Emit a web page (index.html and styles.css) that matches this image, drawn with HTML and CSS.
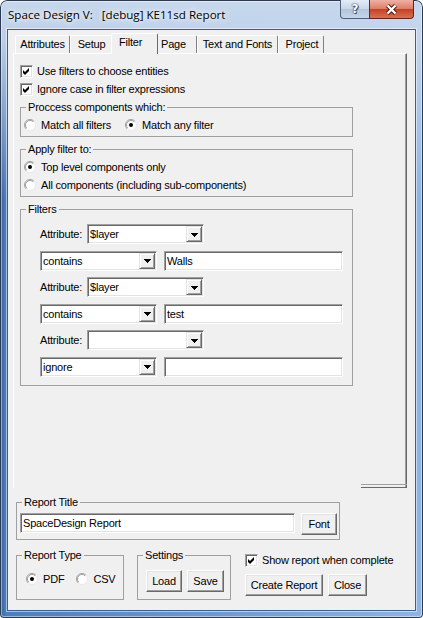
FILE: index.html
```html
<!DOCTYPE html>
<html>
<head>
<meta charset="utf-8">
<title>KE11sd Report</title>
<link rel="stylesheet" href="styles.css">
</head>
<body>
<div class="window">
  <div class="titlebar">
    <div class="title">Space Design V:&nbsp;&nbsp; [debug] KE11sd Report</div>
    <div class="caption">
      <div class="cbtn help">?</div>
      <div class="cbtn close">
        <svg width="13" height="11" viewBox="0 0 13 11"><path d="M2.5 1.5 L10.5 9.5 M10.5 1.5 L2.5 9.5" stroke="#4a1208" stroke-width="4.2" fill="none"/><path d="M2.5 1.5 L10.5 9.5 M10.5 1.5 L2.5 9.5" stroke="#fff" stroke-width="2.4" fill="none"/></svg>
      </div>
    </div>
  </div>
  <div class="client">
    <div class="tabbar">
      <div class="tab t-attr">Attributes</div>
      <div class="tab t-setup">Setup</div>
      <div class="tab active">Filter</div>
      <div class="tab t-page">Page</div>
      <div class="tab t-text">Text and Fonts</div>
      <div class="tab t-proj">Project</div>
    </div>
    <div class="panel">
      <div class="chkrow"><span class="chk"><svg width="9" height="9" viewBox="0 0 9 9"><polygon points="1,3 3,5 7,1 7,4 3,8 1,6" fill="#000"/></svg></span>Use filters to choose entities</div>
      <div class="chkrow"><span class="chk"><svg width="9" height="9" viewBox="0 0 9 9"><polygon points="1,3 3,5 7,1 7,4 3,8 1,6" fill="#000"/></svg></span>Ignore case in filter expressions</div>

      <fieldset class="grp g-process">
        <legend>Proccess components which:</legend>
        <div class="radios-inline">
          <div class="radio r-wide"><svg width="12" height="12" viewBox="0 0 12 12"><circle cx="6" cy="6" r="5.5" fill="#fff"/><path d="M2.1 9.9 A5.5 5.5 0 0 1 9.9 2.1" stroke="#a0a0a0" fill="none"/><path d="M9.9 2.1 A5.5 5.5 0 0 1 2.1 9.9" stroke="#e8e8e8" fill="none"/><path d="M2.8 9.2 A4.5 4.5 0 0 1 9.2 2.8" stroke="#8a8a8a" stroke-width="0.8" fill="none"/></svg>Match all filters</div>
          <div class="radio"><svg width="12" height="12" viewBox="0 0 12 12"><circle cx="6" cy="6" r="5.5" fill="#fff"/><path d="M2.1 9.9 A5.5 5.5 0 0 1 9.9 2.1" stroke="#a0a0a0" fill="none"/><path d="M9.9 2.1 A5.5 5.5 0 0 1 2.1 9.9" stroke="#e8e8e8" fill="none"/><path d="M2.8 9.2 A4.5 4.5 0 0 1 9.2 2.8" stroke="#8a8a8a" stroke-width="0.8" fill="none"/><circle cx="6" cy="6" r="2" fill="#000"/></svg>Match any filter</div>
        </div>
      </fieldset>

      <fieldset class="grp g-apply">
        <legend>Apply filter to:</legend>
        <div class="radio rowr"><svg width="12" height="12" viewBox="0 0 12 12"><circle cx="6" cy="6" r="5.5" fill="#fff"/><path d="M2.1 9.9 A5.5 5.5 0 0 1 9.9 2.1" stroke="#a0a0a0" fill="none"/><path d="M9.9 2.1 A5.5 5.5 0 0 1 2.1 9.9" stroke="#e8e8e8" fill="none"/><path d="M2.8 9.2 A4.5 4.5 0 0 1 9.2 2.8" stroke="#8a8a8a" stroke-width="0.8" fill="none"/><circle cx="6" cy="6" r="2" fill="#000"/></svg>Top level components only</div>
        <div class="radio rowr"><svg width="12" height="12" viewBox="0 0 12 12"><circle cx="6" cy="6" r="5.5" fill="#fff"/><path d="M2.1 9.9 A5.5 5.5 0 0 1 9.9 2.1" stroke="#a0a0a0" fill="none"/><path d="M9.9 2.1 A5.5 5.5 0 0 1 2.1 9.9" stroke="#e8e8e8" fill="none"/><path d="M2.8 9.2 A4.5 4.5 0 0 1 9.2 2.8" stroke="#8a8a8a" stroke-width="0.8" fill="none"/></svg>All components (including sub-components)</div>
      </fieldset>

      <fieldset class="grp g-filters">
        <legend>Filters</legend>
        <div class="frows">
          <div class="frow"><span class="attr">Attribute:</span><div class="combo"><span class="val">$layer</span><span class="dd"><svg width="7" height="4" viewBox="0 0 7 4" shape-rendering="crispEdges"><path d="M0 0h7v1h-1v1h-1v1h-1v1h-1v-1h-1v-1h-1v-1h-1z" fill="#000"/></svg></span></div></div>
          <div class="frow"><div class="combo"><span class="val">contains</span><span class="dd"><svg width="7" height="4" viewBox="0 0 7 4" shape-rendering="crispEdges"><path d="M0 0h7v1h-1v1h-1v1h-1v1h-1v-1h-1v-1h-1v-1h-1z" fill="#000"/></svg></span></div><div class="field f-val">Walls</div></div>
          <div class="frow"><span class="attr">Attribute:</span><div class="combo"><span class="val">$layer</span><span class="dd"><svg width="7" height="4" viewBox="0 0 7 4" shape-rendering="crispEdges"><path d="M0 0h7v1h-1v1h-1v1h-1v1h-1v-1h-1v-1h-1v-1h-1z" fill="#000"/></svg></span></div></div>
          <div class="frow"><div class="combo"><span class="val">contains</span><span class="dd"><svg width="7" height="4" viewBox="0 0 7 4" shape-rendering="crispEdges"><path d="M0 0h7v1h-1v1h-1v1h-1v1h-1v-1h-1v-1h-1v-1h-1z" fill="#000"/></svg></span></div><div class="field f-val">test</div></div>
          <div class="frow"><span class="attr">Attribute:</span><div class="combo"><span class="val"></span><span class="dd"><svg width="7" height="4" viewBox="0 0 7 4" shape-rendering="crispEdges"><path d="M0 0h7v1h-1v1h-1v1h-1v1h-1v-1h-1v-1h-1v-1h-1z" fill="#000"/></svg></span></div></div>
          <div class="frow"><div class="combo"><span class="val">ignore</span><span class="dd"><svg width="7" height="4" viewBox="0 0 7 4" shape-rendering="crispEdges"><path d="M0 0h7v1h-1v1h-1v1h-1v1h-1v-1h-1v-1h-1v-1h-1z" fill="#000"/></svg></span></div><div class="field f-val"></div></div>
        </div>
      </fieldset>
    </div>

    <fieldset class="grp g-title">
      <legend>Report Title</legend>
      <div class="title-row">
        <div class="field f-title">SpaceDesign Report</div>
        <div class="btn b-font">Font</div>
      </div>
    </fieldset>

    <div class="bottom">
      <fieldset class="grp g-type">
        <legend>Report Type</legend>
        <div class="type-row">
          <div class="radio r-pdf"><svg width="12" height="12" viewBox="0 0 12 12"><circle cx="6" cy="6" r="5.5" fill="#fff"/><path d="M2.1 9.9 A5.5 5.5 0 0 1 9.9 2.1" stroke="#a0a0a0" fill="none"/><path d="M9.9 2.1 A5.5 5.5 0 0 1 2.1 9.9" stroke="#e8e8e8" fill="none"/><path d="M2.8 9.2 A4.5 4.5 0 0 1 9.2 2.8" stroke="#8a8a8a" stroke-width="0.8" fill="none"/><circle cx="6" cy="6" r="2" fill="#000"/></svg>PDF</div>
          <div class="radio"><svg width="12" height="12" viewBox="0 0 12 12"><circle cx="6" cy="6" r="5.5" fill="#fff"/><path d="M2.1 9.9 A5.5 5.5 0 0 1 9.9 2.1" stroke="#a0a0a0" fill="none"/><path d="M9.9 2.1 A5.5 5.5 0 0 1 2.1 9.9" stroke="#e8e8e8" fill="none"/><path d="M2.8 9.2 A4.5 4.5 0 0 1 9.2 2.8" stroke="#8a8a8a" stroke-width="0.8" fill="none"/></svg>CSV</div>
        </div>
      </fieldset>

      <fieldset class="grp g-settings">
        <legend>Settings</legend>
        <div class="set-row">
          <div class="btn b-load">Load</div>
          <div class="btn b-save">Save</div>
        </div>
      </fieldset>

      <div class="actions">
        <div class="chkrow"><span class="chk"><svg width="9" height="9" viewBox="0 0 9 9"><polygon points="1,3 3,5 7,1 7,4 3,8 1,6" fill="#000"/></svg></span>Show report when complete</div>
        <div class="act-btns">
          <div class="btn b-create">Create Report</div>
          <div class="btn b-close">Close</div>
        </div>
      </div>
    </div>
  </div>
</div>
</body>
</html>
```

FILE: styles.css
```css
* { box-sizing: border-box; }
html, body { margin: 0; padding: 0; }
body {
  width: 423px;
  height: 618px;
  overflow: hidden;
  background: #ffffff;
  font-family: "Liberation Sans", Arial, sans-serif;
  font-size: 11px;
  letter-spacing: -0.2px;
  color: #000;
}

/* ---------- window frame ---------- */
.window {
  width: 423px;
  height: 618px;
  padding: 0 8px 8px;
  display: flex;
  flex-direction: column;
  border-radius: 7px 7px 4px 4px;
  background:
    linear-gradient(180deg, #c7d8ed 0, rgba(199,216,237,0.9) 40px, rgba(199,216,237,0) 200px),
    linear-gradient(90deg, #33609d 0, #4f7dbb 6px, #6d97d0 200px, #8db4e4 100%);
  box-shadow: inset 0 0 0 1px #2b3b52, inset 0 0 0 2px rgba(255,255,255,0.45);
  overflow: hidden;
}
.titlebar {
  flex: none;
  height: 30px;
  display: flex;
  align-items: flex-start;
}
.title {
  font-family: "Open Sans", sans-serif;
  font-size: 11.6px;
  letter-spacing: 0;
  line-height: 18px;
  margin-top: 6px;
  white-space: nowrap;
  color: #000;
  text-shadow: 0 0 8px #fff, 0 0 4px #fff;
}
.caption {
  margin-left: auto;
  margin-right: 1px;
  display: flex;
}
.cbtn {
  height: 19px;
  border: 1px solid #4f607a;
  border-top: 0;
  display: flex;
  align-items: center;
  justify-content: center;
}
.help {
  width: 30px;
  border-radius: 0 0 0 4px;
  background: linear-gradient(180deg, #e4ecf6 0, #cad7e8 48%, #b3c4dc 52%, #c6d5e9 100%);
  color: #fff;
  font-family: "DejaVu Sans", sans-serif;
  font-weight: bold;
  font-size: 12px;
  letter-spacing: 0;
  text-shadow: 0 0 1px #1f2d40, 0 0 2px #3a4a60, 1px 1px 0 #4a5a70;
}
.close {
  width: 45px;
  margin-left: -1px;
  border-color: #6b2418;
  border-radius: 0 0 4px 0;
  background: linear-gradient(180deg, #eeb2a4 0, #dd7d66 48%, #c5412a 52%, #d9714f 100%);
}
.close svg { display: block; }

/* ---------- client ---------- */
.client {
  flex: 1;
  background: #f0f0f0;
  padding: 3px 0 0 5px;
  box-shadow: 0 0 0 1px #3f5d8c, 0 0 0 2px rgba(255,255,255,0.5);
}

/* tabs */
.tabbar {
  display: flex;
  align-items: flex-end;
  height: 20px;
  padding-left: 2px;
  position: relative;
  z-index: 1;
}
.tab {
  height: 18px;
  padding: 0;
  text-align: center;
  line-height: 16px;
  border: 1px solid #808080;
  border-color: #fff #808080 transparent #fff;
  border-bottom: 0;
  border-radius: 2px 2px 0 0;
  background: #f0f0f0;
  white-space: nowrap;
}
.t-attr { width: 55px; }
.t-setup { width: 43px; }
.t-page { width: 41px; text-align: left; padding-left: 4px; }
.t-text { width: 81px; }
.t-proj { width: 46px; padding-left: 2px; }
.tab.active {
  width: 47px;
  height: 21px;
  margin: 0 -2px -1px;
  text-align: left;
  padding-left: 7px;
  border-right-color: #696969;
  position: relative;
  z-index: 2;
}

.panel {
  width: 394px;
  height: 435px;
  border: 1px solid;
  border-color: #fff #696969 transparent #fff;
  border-bottom: 0;
  box-shadow: inset -1px 0 0 #a0a0a0;
  padding: 8px 0 0 6px;
  position: relative;
}
.panel::after {
  content: "";
  position: absolute;
  right: -1px;
  bottom: 0;
  width: 46px;
  height: 2px;
  border-top: 1px solid #a0a0a0;
  border-bottom: 1px solid #696969;
}

/* checkboxes */
.chkrow {
  display: flex;
  align-items: center;
  height: 18px;
  white-space: nowrap;
}
.chk {
  flex: none;
  width: 13px;
  height: 13px;
  margin-right: 4px;
  background: #fff;
  border: 1px solid;
  border-color: #a0a0a0 #fff #fff #a0a0a0;
  box-shadow: inset 1px 1px 0 #696969, inset -1px -1px 0 #e3e3e3;
}
.chk svg { display: block; margin: 1px 0 0 1px; }

/* radios */
.radio {
  display: flex;
  align-items: center;
  white-space: nowrap;
}
.radio svg { flex: none; display: block; margin-right: 5px; }

/* group boxes */
.grp {
  margin: 0;
  padding: 0 3px;
  border: 1px solid #a0a0a0;
  min-width: 0;
}
.grp legend {
  padding: 0 2px;
  margin-left: 2px;
  line-height: 13px;
  white-space: nowrap;
}

.g-process {
  width: 333px;
  margin-top: 2.5px;
  padding-top: 3px;
  padding-bottom: 3px;
}
.radios-inline { display: flex; height: 16px; }
.radios-inline .radio { height: 16px; }
.r-wide { width: 101px; }

.g-apply {
  width: 333px;
  margin-top: 6px;
  padding-top: 2.5px;
  padding-bottom: 2px;
}
.rowr { height: 18px; }

.g-filters {
  width: 333px;
  margin-top: 5.5px;
  padding-top: 8.5px;
  padding-bottom: 8px;
}
.frows {
  padding-left: 16px;
  display: flex;
  flex-direction: column;
  row-gap: 6.6px;
}
.frow {
  display: flex;
  align-items: center;
  height: 20px;
}
.attr { width: 47px; white-space: nowrap; }

.combo {
  flex: none;
  width: 117px;
  height: 20px;
  display: flex;
  align-items: center;
  padding: 1px 1px 1px 2px;
  background: #fff;
  border: 1px solid;
  border-color: #a0a0a0 #fff #fff #a0a0a0;
  box-shadow: inset 1px 1px 0 #696969, inset -1px -1px 0 #e3e3e3;
}
.combo .val { flex: 1; line-height: 16px; white-space: nowrap; }
.dd {
  flex: none;
  width: 16px;
  height: 16px;
  display: flex;
  align-items: center;
  justify-content: center;
  background: #f0f0f0;
  border: 1px solid;
  border-color: #e3e3e3 #696969 #696969 #e3e3e3;
  box-shadow: inset 1px 1px 0 #fff, inset -1px -1px 0 #a0a0a0;
}
.dd svg { display: block; margin-top: 1px; }

.field {
  height: 20px;
  padding-left: 2px;
  line-height: 18px;
  background: #fff;
  border: 1px solid;
  border-color: #a0a0a0 #fff #fff #a0a0a0;
  box-shadow: inset 1px 1px 0 #696969, inset -1px -1px 0 #e3e3e3;
  white-space: nowrap;
}
.f-val { width: 179px; margin-left: 7px; }

/* buttons */
.btn {
  height: 22px;
  display: flex;
  align-items: center;
  justify-content: center;
  background: #f0f0f0;
  border: 1px solid;
  border-color: #fff #696969 #696969 #fff;
  box-shadow: inset -1px -1px 0 #a0a0a0, inset 1px 1px 0 #e3e3e3;
  white-space: nowrap;
}

/* bottom area */
.g-title {
  width: 324px;
  margin: 7.5px 0 0 3px;
  padding: 4.5px 2px 4px 3px;
}
.title-row {
  display: flex;
  align-items: flex-start;
  gap: 6px;
}
.f-title { width: 275px; }
.b-font { width: 36px; }

.bottom {
  display: flex;
  align-items: flex-start;
  margin: 8.5px 0 0 3px;
}
.g-type {
  width: 108px;
  padding-top: 8.5px;
  padding-bottom: 11px;
}
.type-row {
  display: flex;
  height: 18px;
  padding-left: 6px;
}
.r-pdf { margin-right: 12px; }

.g-settings {
  width: 94px;
  margin-left: 13px;
  padding-top: 8.5px;
  padding-bottom: 7px;
}
.set-row {
  display: flex;
  gap: 5px;
  padding-left: 5px;
}
.b-load { width: 36px; }
.b-save { width: 37px; }

.actions {
  margin-left: 14px;
  padding-top: 2.5px;
}
.act-btns {
  display: flex;
  gap: 5px;
  margin-top: 5px;
}
.b-create { width: 78px; }
.b-close { width: 39px; }
```
